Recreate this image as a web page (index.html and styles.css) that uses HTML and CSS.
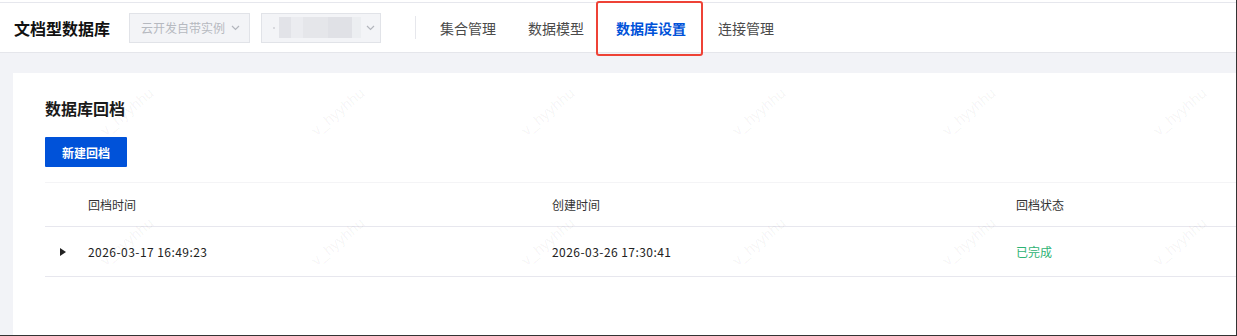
FILE: index.html
```html
<!DOCTYPE html>
<html lang="zh-CN">

<head>
    <meta charset="UTF-8">
    <title>文档型数据库 - 数据库设置</title>
    <link rel="stylesheet" href="styles.css">
</head>

<body>
    <div class="page">
        <div class="topline"></div>

        <header class="topbar">
            <h1 class="brand">文档型数据库</h1>
            <div class="select select-env">
                <span class="select-text">云开发自带实例</span>
                <svg class="chevron" width="9" height="6" viewBox="0 0 9 6"><path d="M1 1l3.5 3.5L8 1" fill="none" stroke="currentColor" stroke-width="1.2"/></svg>
            </div>
            <div class="select select-id">
                <span class="dot"></span>
                <span class="blurred"></span>
                <svg class="chevron" width="9" height="6" viewBox="0 0 9 6"><path d="M1 1l3.5 3.5L8 1" fill="none" stroke="currentColor" stroke-width="1.2"/></svg>
            </div>
            <span class="divider"></span>
            <nav class="tabs">
                <a class="tab">集合管理</a>
                <a class="tab">数据模型</a>
                <a class="tab active">数据库设置</a>
                <a class="tab">连接管理</a>
            </nav>
            <!-- annotation box drawn over the active tab -->
            <div class="highlight"></div>
        </header>

        <main class="content">
            <section class="card">
                <h2 class="card-title">数据库回档</h2>
                <button class="btn-primary">新建回档</button>

                <table class="table">
                    <colgroup>
                        <col class="col-expand">
                        <col class="col-time">
                        <col class="col-time">
                        <col>
                    </colgroup>
                    <thead>
                        <tr>
                            <th></th>
                            <th>回档时间</th>
                            <th>创建时间</th>
                            <th>回档状态</th>
                        </tr>
                    </thead>
                    <tbody>
                        <tr>
                            <td class="expand"><span class="caret"></span></td>
                            <td class="time">2026-03-17 16:49:23</td>
                            <td class="time">2026-03-26 17:30:41</td>
                            <td class="status-done">已完成</td>
                        </tr>
                    </tbody>
                </table>
            </section>
        </main>

        <div class="watermarks">
            <span>v_hyyhhu</span><span>v_hyyhhu</span><span>v_hyyhhu</span><span>v_hyyhhu</span><span>v_hyyhhu</span><span>v_hyyhhu</span>
            <span>v_hyyhhu</span><span>v_hyyhhu</span><span>v_hyyhhu</span><span>v_hyyhhu</span><span>v_hyyhhu</span><span>v_hyyhhu</span>
        </div>
    </div>
</body>

</html>
```

FILE: styles.css
```css
*,
*::after,
*::before {
    box-sizing: border-box;
}

body {
    margin: 0;
    font-family: "Noto Sans CJK SC", "Liberation Sans", sans-serif;
    color: #222;
}

.page {
    position: relative;
    width: 1237px;
    height: 336px;
    overflow: hidden;
    background: #f2f3f7;
    border-right: 1px solid #333;
    border-bottom: 1px solid #333;
}

.topline {
    height: 3px;
    background: #fff;
    border-bottom: 1px solid #e6e7ed;
}

.topbar {
    position: relative;
    display: flex;
    align-items: center;
    height: 50px;
    padding-left: 14px;
    background: #fff;
    border-bottom: 1px solid #e5e6eb;
}

.brand {
    margin: 0 19px 0 0;
    font-size: 16px;
    font-weight: 700;
    color: #111;
}

.select {
    display: flex;
    align-items: center;
    height: 30px;
    padding-left: 11px;
    background: #f3f4f7;
    border: 1px solid #e1e3e8;
    color: #b6b9c0;
}

.select-env {
    width: 121px;
    margin-right: 11px;
}

.select-id {
    width: 120px;
}

.select-text {
    font-size: 12px;
    margin-right: 6px;
}

.chevron {
    color: #b3b6bd;
}

.dot {
    width: 2px;
    height: 2px;
    margin-right: 4px;
    background: #d8d9de;
}

.blurred {
    width: 82px;
    height: 21px;
    margin-right: 5px;
    background: linear-gradient(90deg, #e2e3e8 0, #e2e3e8 12px, #ebecf0 12px, #ebecf0 24px, #e5e6ea 24px, #e5e6ea 49px, #e0e1e6 49px, #e0e1e6 73px, #eceef1 73px);
    filter: blur(0.6px);
}

.divider {
    width: 1px;
    height: 23px;
    margin: 0 8px 0 34px;
    background: #e6e7ec;
}

.tabs {
    display: flex;
    height: 100%;
}

.tab {
    display: flex;
    align-items: center;
    padding: 0 16px;
    font-size: 14px;
    color: #4a4a4a;
    cursor: pointer;
}

.tab.active {
    color: #0052d9;
    font-weight: 700;
}

.highlight {
    position: absolute;
    left: 596px;
    top: -2px;
    width: 107px;
    height: 55px;
    border: 2px solid #ee4236;
    border-radius: 3px;
}

.content {
    padding: 20px 0 0 13px;
}

.card {
    margin-right: -40px;
    padding: 23px 32px;
    height: 300px;
    background: #fff;
}

.card-title {
    margin: 0;
    font-size: 16px;
    line-height: 24px;
    font-weight: 700;
    color: #1a1a1a;
}

.btn-primary {
    display: block;
    height: 30px;
    margin-top: 17px;
    padding: 0 17px;
    border: 0;
    border-radius: 1px;
    background: #0052d9;
    color: #fff;
    font-family: inherit;
    font-size: 12px;
    font-weight: 700;
}

.table {
    width: 100%;
    margin-top: 15px;
    border-collapse: collapse;
    table-layout: fixed;
    font-size: 12px;
    border-top: 1px solid #f4f4f6;
}

.col-expand {
    width: 30px;
}

.col-time {
    width: 464px;
}

.table th,
.table td {
    padding: 0 0 0 13px;
    text-align: left;
    border-bottom: 1px solid #e7e7ee;
}

.table th {
    height: 44px;
    font-weight: 400;
    color: #333;
}

.table td {
    height: 50px;
    color: #222;
}

.table td.expand {
    padding-left: 15px;
}

.table td.time {
    letter-spacing: 0.45px;
}

.table td.status-done {
    color: #2eb374;
}

.caret {
    display: block;
    width: 0;
    height: 0;
    border-left: 6px solid #222;
    border-top: 4px solid transparent;
    border-bottom: 4px solid transparent;
}

.watermarks {
    position: absolute;
    left: 21px;
    top: 46px;
    display: grid;
    grid-template-columns: repeat(6, 210.5px);
    grid-auto-rows: 130px;
    pointer-events: none;
}

.watermarks span {
    display: flex;
    align-items: center;
    justify-content: center;
    font-family: "Liberation Sans", sans-serif;
    font-size: 15px;
    color: rgba(0, 0, 0, 0.05);
    transform: rotate(-40deg);
}
```
